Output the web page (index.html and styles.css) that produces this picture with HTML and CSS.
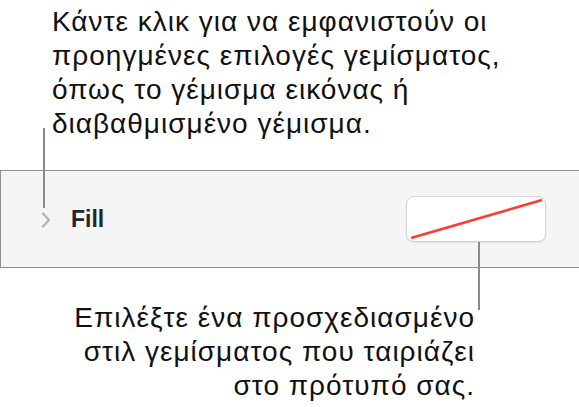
FILE: index.html
```html
<!DOCTYPE html>
<html lang="el">
  <head>
    <meta charset="UTF-8" />
    <meta name="viewport" content="width=device-width, initial-scale=1.0" />
    <title>Fill</title>
    <link rel="stylesheet" href="styles.css">
  </head>
  <body>
    <div class="stage">
      <p class="note noteTop">
        Κάντε κλικ για να εμφανιστούν οι<br />
        προηγμένες επιλογές γεμίσματος,<br />
        όπως το γέμισμα εικόνας ή<br />
        διαβαθμισμένο γέμισμα.
      </p>

      <div class="panel">
        <svg class="chevron" width="12" height="18" viewBox="0 0 12 18">
          <path d="M3 2.5 L9 9 L3 15.5" fill="none" stroke="#b5b5b5" stroke-width="2.4" stroke-linecap="round" stroke-linejoin="round" />
        </svg>
        <span class="panelTitle">Fill</span>
        <button class="swatch">
          <svg width="138" height="44" viewBox="0 0 138 44">
            <line x1="4" y1="41" x2="135" y2="3" stroke="#ff3b30" stroke-width="2.6" />
          </svg>
        </button>
      </div>

      <p class="note noteBottom">
        Επιλέξτε ένα προσχεδιασμένο<br />
        στιλ γεμίσματος που ταιριάζει<br />
        στο πρότυπό σας.
      </p>

      <!-- leader lines from the notes to the controls -->
      <div class="leader leaderTop"></div>
      <div class="leader leaderBottom"></div>
    </div>
  </body>
</html>
```

FILE: styles.css
```css
body {
  margin: 0;
  background: #fff;
  font-family: "Liberation Sans", Arial, "Noto Sans", sans-serif;
  color: #111;
}
.stage {
  position: relative;
  width: 579px;
  height: 407px;
  overflow: hidden;
}
.note {
  margin: 0;
  font-size: 28px;
  line-height: 34px;
  letter-spacing: 1px;
}
.noteTop {
  padding: 5px 0 0 52px;
}
.noteBottom {
  width: 475px;
  margin-top: 33px;
  text-align: right;
}
.panel {
  display: flex;
  align-items: center;
  height: 96px;
  margin-top: 29px;
  padding-left: 39px;
  background: #f5f5f5;
  border: 1px solid #8e8e8e;
  border-right: none;
}
.chevron {
  flex: none;
  margin-top: 2px;
}
.panelTitle {
  margin-left: 19px;
  font-size: 23px;
  font-weight: bold;
  color: #262626;
}
.swatch {
  display: block;
  width: 140px;
  height: 46px;
  margin-left: auto;
  margin-right: 33px;
  padding: 0;
  background: #fff;
  border: 1px solid #d4d4d4;
  border-radius: 8px;
  box-shadow: 0 1px 1px rgba(0, 0, 0, 0.08);
  overflow: hidden;
}
.swatch svg {
  display: block;
}
.leader {
  position: absolute;
  width: 2px;
  background: #8a8a8a;
}
.leaderTop {
  left: 43px;
  top: 128px;
  height: 80px;
}
.leaderBottom {
  left: 478px;
  top: 242px;
  height: 68px;
}
```
